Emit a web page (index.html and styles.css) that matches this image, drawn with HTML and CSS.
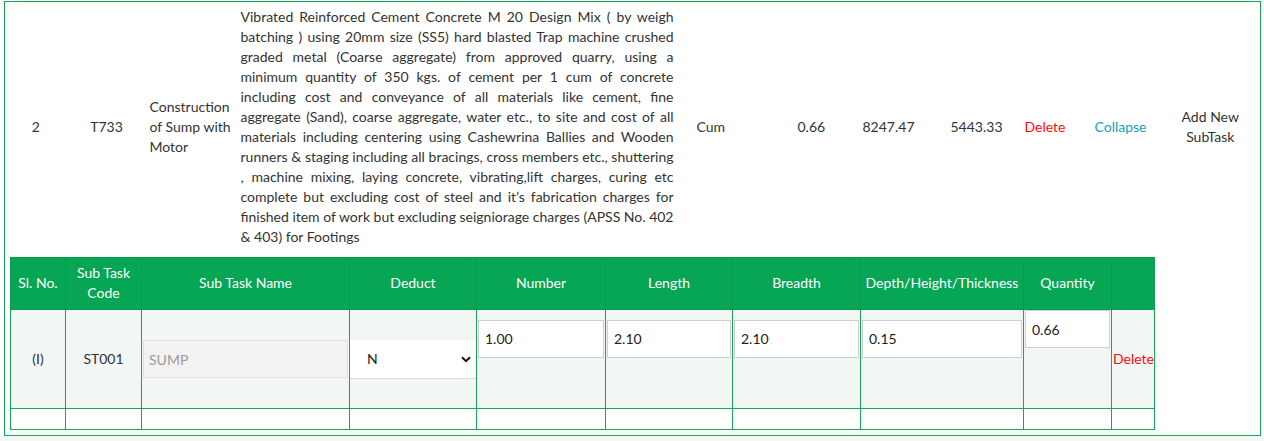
FILE: index.html
```html
<!DOCTYPE html>
<html lang="en">
<head>
<meta charset="utf-8">
<title>Estimate Tasks</title>
<link rel="stylesheet" href="styles.css">
</head>
<body>
<div class="page">
  <table class="task-table">
    <colgroup>
      <col class="w-sl"><col class="w-code"><col class="w-name"><col class="w-desc"><col class="w-unit"><col class="w-qty"><col class="w-rate"><col class="w-amt"><col class="w-del"><col class="w-col"><col class="w-add">
    </colgroup>
    <tbody>
      <tr class="task-row">
        <td class="c-sl">2</td>
        <td class="c-code">T733</td>
        <td class="c-name">Construction of Sump with Motor</td>
        <td class="c-desc">Vibrated Reinforced Cement Concrete M 20 Design Mix ( by weigh batching ) using 20mm size (SS5) hard blasted Trap machine crushed graded metal (Coarse aggregate) from approved quarry, using a minimum quantity of 350 kgs. of cement per 1 cum of concrete including cost and conveyance of all materials like cement, fine aggregate (Sand), coarse aggregate, water etc., to site and cost of all materials including centering using Cashewrina Ballies and Wooden runners &amp; staging including all bracings, cross members etc., shuttering , machine mixing, laying concrete, vibrating,lift charges, curing etc complete but excluding cost of steel and it’s fabrication charges for finished item of work but excluding seigniorage charges (APSS No. 402 &amp; 403) for Footings</td>
        <td class="c-unit">Cum</td>
        <td class="c-qty">0.66</td>
        <td class="c-rate">8247.47</td>
        <td class="c-amt">5443.33</td>
        <td class="c-del"><a class="link-delete" href="#">Delete</a></td>
        <td class="c-collapse"><a class="link-collapse" href="#">Collapse</a></td>
        <td class="c-add">Add New SubTask</td>
      </tr>
      <tr class="sub-row">
        <td class="sub-cell" colspan="10">
          <table class="sub-table">
            <colgroup>
              <col class="s-sl"><col class="s-code"><col class="s-name"><col class="s-deduct"><col class="s-num"><col class="s-len"><col class="s-br"><col class="s-depth"><col class="s-qty"><col class="s-act">
            </colgroup>
            <thead>
              <tr>
                <th>Sl. No.</th>
                <th>Sub Task Code</th>
                <th>Sub Task Name</th>
                <th>Deduct</th>
                <th>Number</th>
                <th>Length</th>
                <th>Breadth</th>
                <th>Depth/Height/Thickness</th>
                <th>Quantity</th>
                <th></th>
              </tr>
            </thead>
            <tbody>
              <tr class="sub-data">
                <td class="t-center">(I)</td>
                <td class="t-center">ST001</td>
                <td><input class="form-input is-disabled" type="text" value="SUMP" disabled></td>
                <td>
                  <span class="select-wrap">
                    <select class="form-select">
                      <option>N</option>
                      <option>Y</option>
                    </select>
                    <svg class="select-caret" width="10" height="7" viewBox="0 0 10 7"><path d="M1 1.2 L5 5.2 L9 1.2" fill="none" stroke="#111" stroke-width="2"/></svg>
                  </span>
                </td>
                <td><div class="field-stack"><input class="form-input" type="text" value="1.00"><div class="field-hint"></div></div></td>
                <td><div class="field-stack"><input class="form-input" type="text" value="2.10"><div class="field-hint"></div></div></td>
                <td><div class="field-stack"><input class="form-input" type="text" value="2.10"><div class="field-hint"></div></div></td>
                <td><div class="field-stack"><input class="form-input" type="text" value="0.15"><div class="field-hint"></div></div></td>
                <td class="cell-top"><input class="form-input" type="text" value="0.66"></td>
                <td><a class="link-delete" href="#">Delete</a></td>
              </tr>
              <tr class="sub-blank">
                <td></td><td></td><td></td><td></td><td></td><td></td><td></td><td></td><td></td><td></td>
              </tr>
            </tbody>
          </table>
        </td>
        <td class="c-empty"></td>
      </tr>
    </tbody>
  </table>
  <div class="page-footer"></div>
</div>
</body>
</html>
```
FILE: styles.css
```css
html, body {
  margin: 0;
  padding: 0;
  background: #ffffff;
}

body {
  font-family: Lato, "Open Sans", "Liberation Sans", sans-serif;
  font-size: 14px;
  line-height: 20px;
  color: #333333;
}

.page {
  padding: 1px 0 0 4px;
}

a {
  text-decoration: none;
}

.link-delete { color: #ff0a0a; }
.link-collapse { color: #17a2b8; }

/* outer task table */
.task-table {
  table-layout: fixed;
  border-collapse: collapse;
  width: 1257px;
  border: 1px solid #17a658;
}

.w-sl { width: 62px; }
.w-code { width: 80px; }
.w-name { width: 90px; }
.w-desc { width: 441px; }
.w-unit { width: 83px; }
.w-qty { width: 70px; }
.w-rate { width: 90px; }
.w-amt { width: 90px; }
.w-del { width: 70px; }
.w-col { width: 80px; }
.w-add { width: 100px; }

.task-row td {
  padding: 5px 4px 4px 4px;
  vertical-align: middle;
}

.task-row .c-sl,
.task-row .c-code,
.task-row .c-add { text-align: center; }

.task-row .c-name { padding-left: 3px; padding-right: 1px; }
.task-row .c-desc { text-align: justify; }
.task-row .c-unit { padding-left: 19px; }
.task-row .c-qty { padding-left: 37px; }
.task-row .c-rate { padding-left: 32px; }
.task-row .c-amt { padding-left: 30px; }
.task-row .c-del { padding-left: 14px; }
.task-row .c-collapse { padding-left: 14px; }
.task-row .c-add { padding-left: 2px; padding-right: 2px; }

.sub-row .sub-cell {
  padding: 6px 7px 5px 5px;
}

/* nested sub task table */
.sub-table {
  table-layout: fixed;
  border-collapse: collapse;
  width: 100%;
}

.s-sl { width: 55px; }
.s-code { width: 76px; }
.s-name { width: 208px; }
.s-deduct { width: 127px; }
.s-num { width: 129px; }
.s-len { width: 127px; }
.s-br { width: 128px; }
.s-depth { width: 163px; }
.s-qty { width: 88px; }
.s-act { width: 43px; }

.sub-table th {
  background: #06a655;
  color: #ffffff;
  font-weight: 400;
  padding: 5px 3px 6px;
  text-align: center;
  vertical-align: middle;
  border: 1px solid #0b9a4e;
  white-space: normal;
}

.sub-table td {
  border: 1px solid #17a658;
  padding: 0 1px;
  vertical-align: middle;
}

.sub-data td {
  background: #f2f7f5;
  height: 98px;
}

.sub-blank td {
  background: #ffffff;
  height: 20px;
}

.t-center { text-align: center; }

.cell-top { vertical-align: top !important; }

.form-input {
  display: block;
  width: 100%;
  height: 38px;
  box-sizing: border-box;
  border: 1px solid #cfcfcf;
  border-radius: 0;
  background: #ffffff;
  padding: 0 6px;
  font-family: Lato, "Open Sans", "Liberation Sans", sans-serif;
  font-size: 14px;
  color: #222222;
  margin: 0;
}

.form-input.is-disabled {
  background: #f1f2f1;
  border-color: #e0e0e0;
  color: #9a9a9a;
  padding-left: 5px;
}

.field-stack {
  display: flex;
  flex-direction: column;
}

.field-hint {
  height: 41px;
}

.select-wrap {
  position: relative;
  display: block;
  margin: 0 -1px;
}

.form-select {
  display: block;
  width: 100%;
  height: 39px;
  box-sizing: border-box;
  -webkit-appearance: none;
  appearance: none;
  border: 0;
  border-bottom: 1px solid #dadada;
  border-radius: 0;
  background: #ffffff;
  padding: 0 20px 0 17px;
  font-family: Lato, "Open Sans", "Liberation Sans", sans-serif;
  font-size: 14px;
  color: #222222;
  margin: 0;
}

.select-caret {
  position: absolute;
  right: 5px;
  top: 16px;
  pointer-events: none;
}

.page-footer {
  margin-left: -4px;
  height: 20px;
  background: #f3f7f5;
}
```
